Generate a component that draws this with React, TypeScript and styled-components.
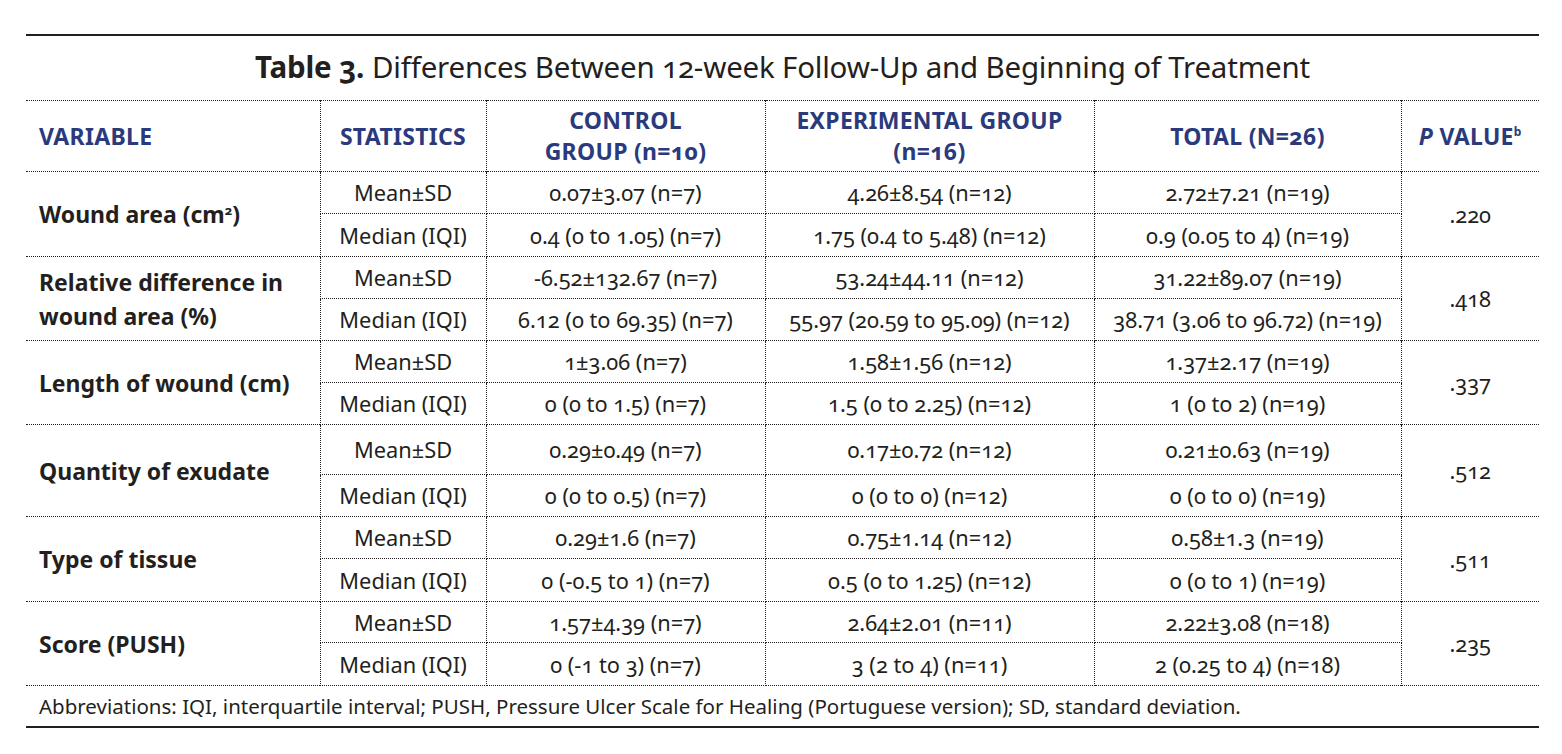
import React from "react";
import styled, { createGlobalStyle } from "styled-components";

const Global = createGlobalStyle`
  html, body { margin: 0; padding: 0; background: #ffffff; }
  body { font-family: "Noto Sans", "Open Sans", sans-serif; color: #231f20; }
`;

const Page = styled.div`
  padding: 34px 0 0 26px;
  width: 1513px;
`;

const Rule = styled.div`
  height: 2px;
  background: #231f20;
`;

const Title = styled.h1`
  margin: 0;
  height: 64px;
  box-sizing: border-box;
  padding-bottom: 3px;
  display: flex;
  align-items: center;
  justify-content: center;
  font-size: 29.5px;
  font-weight: 400;
  letter-spacing: -0.2px;
  font-variant-numeric: oldstyle-nums;
  color: #231f20;
  b { font-weight: 700; margin-right: 8px; }
`;

const Table = styled.table`
  width: 1513px;
  border-collapse: collapse;
  table-layout: fixed;
  font-size: 21.8px;
  font-variant-numeric: oldstyle-nums;
  border-top: 1px dotted #231f20;
  border-bottom: 1px dotted #231f20;
`;

const Row = styled.tr<{ $h: number }>`
  height: ${(p) => p.$h}px;
`;

const HeadCell = styled.th<{ $align?: string }>`
  padding: ${(p) => (p.$align === "left" ? "0 0 0 13px" : "0 4px")};
  text-align: ${(p) => p.$align || "center"};
  vertical-align: middle;
  font-size: 23px;
  font-weight: 700;
  letter-spacing: 0.3px;
  line-height: 31px;
  color: #2a3a7c;
  white-space: nowrap;
  border-left: 1px dotted #231f20;
  &:first-child { border-left: none; }
  i { font-style: italic; }
  sup { font-size: 12px; vertical-align: 9px; line-height: 0; }
`;

const VarCell = styled.td`
  padding: 0 0 0 13px;
  text-align: left;
  vertical-align: middle;
  font-size: 23px;
  font-weight: 700;
  line-height: 34px;
  white-space: nowrap;
  border-top: 1px dotted #231f20;
  sup { font-size: 13px; vertical-align: 8px; line-height: 0; }
`;

const Cell = styled.td`
  padding: 0;
  text-align: center;
  vertical-align: middle;
  white-space: nowrap;
  border: 1px dotted #231f20;
`;

const PCell = styled.td`
  padding: 0;
  text-align: center;
  vertical-align: middle;
  border-top: 1px dotted #231f20;
  border-left: 1px dotted #231f20;
`;

const Footer = styled.div`
  height: 40px;
  display: flex;
  align-items: center;
  padding-left: 13px;
  font-size: 20.5px;
`;

type Group = {
  label: React.ReactNode;
  mean: string[];
  median: string[];
  p: string;
  h: [number, number];
};

const groups: Group[] = [
  {
    label: (
      <>
        Wound area (cm<sup>2</sup>)
      </>
    ),
    mean: ["0.07±3.07 (n=7)", "4.26±8.54 (n=12)", "2.72±7.21 (n=19)"],
    median: ["0.4 (0 to 1.05) (n=7)", "1.75 (0.4 to 5.48) (n=12)", "0.9 (0.05 to 4) (n=19)"],
    p: ".220",
    h: [42, 43],
  },
  {
    label: (
      <>
        Relative difference in
        <br />
        wound area (%)
      </>
    ),
    mean: ["-6.52±132.67 (n=7)", "53.24±44.11 (n=12)", "31.22±89.07 (n=19)"],
    median: ["6.12 (0 to 69.35) (n=7)", "55.97 (20.59 to 95.09) (n=12)", "38.71 (3.06 to 96.72) (n=19)"],
    p: ".418",
    h: [42, 42],
  },
  {
    label: "Length of wound (cm)",
    mean: ["1±3.06 (n=7)", "1.58±1.56 (n=12)", "1.37±2.17 (n=19)"],
    median: ["0 (0 to 1.5) (n=7)", "1.5 (0 to 2.25) (n=12)", "1 (0 to 2) (n=19)"],
    p: ".337",
    h: [42, 42],
  },
  {
    label: "Quantity of exudate",
    mean: ["0.29±0.49 (n=7)", "0.17±0.72 (n=12)", "0.21±0.63 (n=19)"],
    median: ["0 (0 to 0.5) (n=7)", "0 (0 to 0) (n=12)", "0 (0 to 0) (n=19)"],
    p: ".512",
    h: [50, 42],
  },
  {
    label: "Type of tissue",
    mean: ["0.29±1.6 (n=7)", "0.75±1.14 (n=12)", "0.58±1.3 (n=19)"],
    median: ["0 (-0.5 to 1) (n=7)", "0.5 (0 to 1.25) (n=12)", "0 (0 to 1) (n=19)"],
    p: ".511",
    h: [42, 43],
  },
  {
    label: "Score (PUSH)",
    mean: ["1.57±4.39 (n=7)", "2.64±2.01 (n=11)", "2.22±3.08 (n=18)"],
    median: ["0 (-1 to 3) (n=7)", "3 (2 to 4) (n=11)", "2 (0.25 to 4) (n=18)"],
    p: ".235",
    h: [41, 43],
  },
];

export default function App() {
  return (
    <>
      <Global />
      <Page>
        <Rule />
        <Title>
          <b>Table 3.</b> Differences Between 12-week Follow-Up and Beginning of Treatment
        </Title>
        <Table>
          <colgroup>
            <col style={{ width: 294 }} />
            <col style={{ width: 166 }} />
            <col style={{ width: 279 }} />
            <col style={{ width: 329 }} />
            <col style={{ width: 307 }} />
            <col style={{ width: 138 }} />
          </colgroup>
          <thead>
            <Row $h={71}>
              <HeadCell $align="left">VARIABLE</HeadCell>
              <HeadCell>STATISTICS</HeadCell>
              <HeadCell>
                CONTROL
                <br />
                GROUP (n=10)
              </HeadCell>
              <HeadCell>
                EXPERIMENTAL GROUP
                <br />
                (n=16)
              </HeadCell>
              <HeadCell>TOTAL (N=26)</HeadCell>
              <HeadCell>
                <i>P</i> VALUE<sup>b</sup>
              </HeadCell>
            </Row>
          </thead>
          <tbody>
            {groups.map((g, i) => (
              <React.Fragment key={i}>
                <Row $h={g.h[0]}>
                  <VarCell rowSpan={2}>{g.label}</VarCell>
                  <Cell>Mean±SD</Cell>
                  {g.mean.map((v, j) => (
                    <Cell key={j}>{v}</Cell>
                  ))}
                  <PCell rowSpan={2}>{g.p}</PCell>
                </Row>
                <Row $h={g.h[1]}>
                  <Cell>Median (IQI)</Cell>
                  {g.median.map((v, j) => (
                    <Cell key={j}>{v}</Cell>
                  ))}
                </Row>
              </React.Fragment>
            ))}
          </tbody>
        </Table>
        <Footer>
          Abbreviations: IQI, interquartile interval; PUSH, Pressure Ulcer Scale for Healing (Portuguese version); SD, standard deviation.
        </Footer>
        <Rule />
      </Page>
    </>
  );
}
